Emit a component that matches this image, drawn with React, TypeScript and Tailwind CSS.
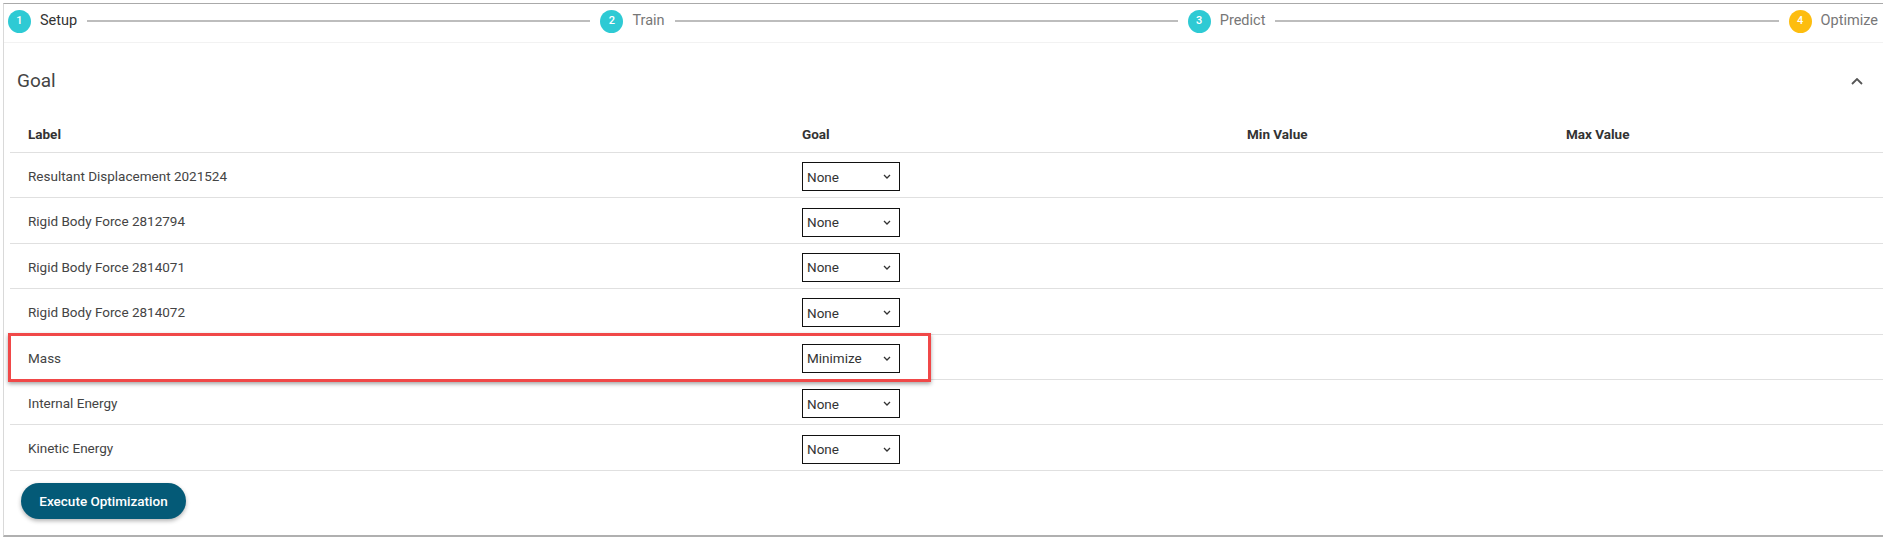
import React from "react";

const steps = [
  { n: 1, label: "Setup", active: true, color: "bg-[#2ecad4]" },
  { n: 2, label: "Train", active: false, color: "bg-[#2ecad4]" },
  { n: 3, label: "Predict", active: false, color: "bg-[#2ecad4]" },
  { n: 4, label: "Optimize", active: false, color: "bg-[#fdbd0f]" },
];

const rows = [
  { label: "Resultant Displacement 2021524", goal: "None" },
  { label: "Rigid Body Force 2812794", goal: "None" },
  { label: "Rigid Body Force 2814071", goal: "None" },
  { label: "Rigid Body Force 2814072", goal: "None" },
  { label: "Mass", goal: "Minimize", highlight: true },
  { label: "Internal Energy", goal: "None" },
  { label: "Kinetic Energy", goal: "None" },
];

function SelectBox({ value }: { value: string }) {
  return (
    <div className="mt-[3px] flex h-[29px] w-[98px] items-center justify-between border border-[#111] pl-[4px] pr-[8px] text-[13.5px] text-[#333]">
      <span>{value}</span>
      <svg width="8" height="5" viewBox="0 0 8 5" fill="none">
        <path d="M1 1l3 3 3-3" stroke="#333" strokeWidth="1.3" />
      </svg>
    </div>
  );
}

function Stepper() {
  return (
    <div className="flex h-[34px] items-center pl-[4px] pr-[5px]">
      {steps.map((s, i) => (
        <React.Fragment key={s.n}>
          <div className="flex items-center gap-[9px]">
            <div
              className={`flex h-[23px] w-[23px] items-center justify-center rounded-full text-[11px] font-medium text-white ${s.color}`}
            >
              {s.n}
            </div>
            <span className={s.active ? "text-[14.5px] text-[#333]" : "text-[14.5px] text-[#777]"}>
              {s.label}
            </span>
          </div>
          {i < steps.length - 1 && <div className="mx-[10px] h-[2px] flex-1 bg-[#bdbdbd]" />}
        </React.Fragment>
      ))}
    </div>
  );
}

export default function App() {
  return (
    <div className="h-[540px] w-[1883px] overflow-hidden bg-white pl-[3px] pt-[3px] font-['Roboto',sans-serif]">
      <div className="border-b-2 border-l border-t border-b-[#b0b0b0] border-l-[#d9d9d9] border-t-[#aaaaaa]">
        <Stepper />
        <div className="h-[5px] border-b border-[#f2f2f2]" />

        <div className="flex h-[74px] items-center justify-between pl-[13px] pr-[20px] pt-[3px]">
          <h2 className="text-[19px] text-[#444]">Goal</h2>
          <svg width="12" height="7" viewBox="0 0 12 7" fill="none">
            <path d="M1 6l5-5 5 5" stroke="#555" strokeWidth="1.8" />
          </svg>
        </div>

        <div className="ml-[6px]">
          <div className="grid h-[36px] grid-cols-[774px_445px_319px_1fr] items-center border-b border-[#e0e0e0] text-[13.5px] font-bold text-[#333]">
            <div className="pl-[18px]">Label</div>
            <div className="pl-[18px]">Goal</div>
            <div className="pl-[18px]">Min Value</div>
            <div className="pl-[18px]">Max Value</div>
          </div>
          {rows.map((r) => (
            <div
              key={r.label}
              className="relative grid h-[45.4px] grid-cols-[774px_445px_319px_1fr] items-center border-b border-[#e0e0e0] text-[13.5px] text-[#444]"
            >
              <div className="pl-[18px] pt-[2px]">{r.label}</div>
              <div className="pl-[18px]">
                <SelectBox value={r.goal} />
              </div>
              <div />
              <div />
              {r.highlight && (
                <div className="absolute -left-[2px] -top-[2px] h-[49px] w-[923px] border-[3px] border-[#f04848] shadow-[0_2px_4px_rgba(0,0,0,0.35)]" />
              )}
            </div>
          ))}
        </div>

        <div className="pb-[16px] pl-[17px] pt-[12px]">
          <button className="h-[36px] w-[165px] rounded-full bg-[#045a77] text-[13.5px] font-medium text-white shadow-[0_2px_4px_rgba(0,0,0,0.3)]">
            Execute Optimization
          </button>
        </div>
      </div>
    </div>
  );
}
